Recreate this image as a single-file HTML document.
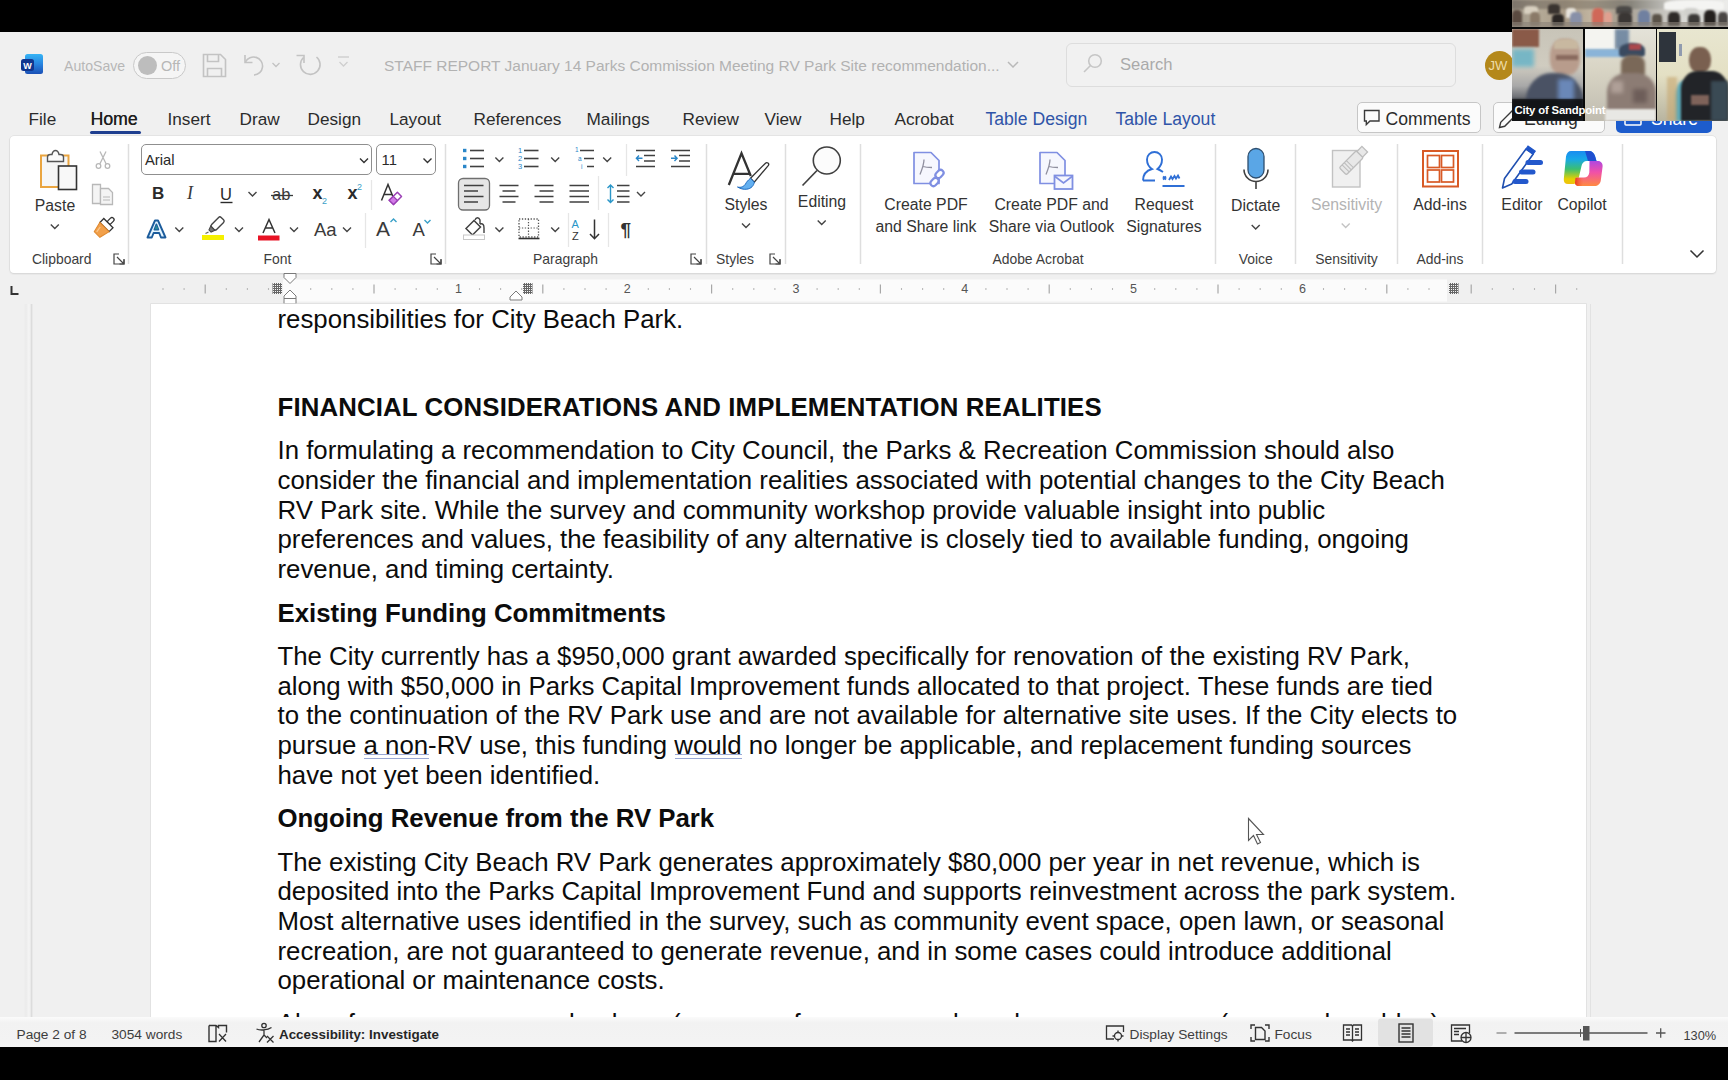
<!DOCTYPE html>
<html><head><meta charset="utf-8">
<style>
*{box-sizing:border-box;margin:0;padding:0}
html,body{width:1728px;height:1080px;overflow:hidden;background:#000;font-family:"Liberation Sans",sans-serif;color:#242424}
.abs{position:absolute}
.t{position:absolute;white-space:nowrap;line-height:0}
.doc{position:absolute;left:277.5px;font-size:25.8px;color:#0c0c0c;white-space:nowrap;line-height:0}
.doc u{text-decoration:none;border-bottom:1.5px solid #8a9bc0}
.h{font-weight:bold}
</style></head><body>
<div class="abs" style="left:0;top:32px;width:1728px;height:1015px;background:#f0f0f0"></div>
<svg class="abs" style="left:20px;top:52px" width="24" height="24" viewBox="0 0 24 24">
<defs><linearGradient id="wg" x1="0" y1="0" x2="0" y2="1"><stop offset="0" stop-color="#36b4f5"/><stop offset="0.5" stop-color="#2784e0"/><stop offset="1" stop-color="#1a4fb5"/></linearGradient></defs>
<rect x="5" y="2" width="18" height="20" rx="2.5" fill="url(#wg)"/>
<rect x="1" y="7" width="13" height="12" rx="2.5" fill="#10368f"/>
<text x="7.5" y="16.5" font-size="9" font-weight="bold" fill="#fff" text-anchor="middle" font-family="Liberation Sans">W</text></svg>
<div class="t" style="left:64.0px;top:66.11px;font-size:14.1px;color:#b7b7b7;font-weight:normal;">AutoSave</div>
<div class="abs" style="left:133px;top:52px;width:53px;height:27px;border:1.5px solid #c9c9c9;border-radius:14px;background:#f5f5f5"></div>
<div class="abs" style="left:137.5px;top:56px;width:19px;height:19px;border-radius:50%;background:#bdbdbd"></div>
<div class="t" style="left:161.0px;top:65.98px;font-size:14.5px;color:#b7b7b7;font-weight:normal;">Off</div>
<svg class="abs" style="left:0;top:0" width="1100" height="95" fill="none" stroke="#c3c3c3" stroke-width="1.6">
<path d="M203.5 54.5h17l5 5v17h-22z"/><path d="M207.5 54.5v7h11v-7"/><path d="M207.5 76.5v-8h14v8"/>
<path d="M245 55v7.5h7.5"/><path d="M245.5 62A9 9 0 1 1 254 75"/>
<path d="M272.5 63l3.5 3.5 3.5-3.5" stroke-width="1.3"/>
<path d="M303.5 57.5A9.8 9.8 0 1 0 316.5 57"/><path d="M296.5 55.5h7.5v7.5"/>
<path d="M338 57h11M339.5 62l4 4 4-4" stroke="#cfcfcf" stroke-width="1.3"/>
<path d="M1008 62l5 5 5-5" stroke="#b9b9b9" stroke-width="1.5"/>
</svg>
<div class="t" style="left:384.0px;top:65.63px;font-size:15.5px;color:#b2b2b2;font-weight:normal;">STAFF REPORT January 14 Parks Commission Meeting RV Park Site recommendation...</div>
<div class="abs" style="left:1066px;top:43px;width:390px;height:44px;border:1.5px solid #dddddd;border-radius:6px;background:#f1f1f1"></div>
<svg class="abs" style="left:1080px;top:52px" width="24" height="24" fill="none" stroke="#c6c6c6" stroke-width="1.6"><circle cx="15" cy="9" r="6.3"/><path d="M10.5 13.5L4 20"/></svg>
<div class="t" style="left:1120.0px;top:65.25px;font-size:16.6px;color:#aaaaaa;font-weight:normal;">Search</div>
<div class="abs" style="left:1485px;top:51px;width:29px;height:29px;border-radius:50%;background:#b4881a"></div>
<div class="t" style="left:1488.5px;top:66.00px;font-size:13px;color:#efdca8;font-weight:normal;">JW</div>
<div class="t" style="left:28.5px;top:119.04px;font-size:17.2px;color:#2b2b2b;font-weight:normal;">File</div>
<div class="t" style="left:90.5px;top:118.90px;font-size:17.6px;color:#1f1f1f;font-weight:normal;text-shadow:0.35px 0 0 #1f1f1f">Home</div>
<div class="t" style="left:167.5px;top:119.04px;font-size:17.2px;color:#2b2b2b;font-weight:normal;">Insert</div>
<div class="t" style="left:239.5px;top:119.04px;font-size:17.2px;color:#2b2b2b;font-weight:normal;">Draw</div>
<div class="t" style="left:307.5px;top:119.04px;font-size:17.2px;color:#2b2b2b;font-weight:normal;">Design</div>
<div class="t" style="left:389.5px;top:119.04px;font-size:17.2px;color:#2b2b2b;font-weight:normal;">Layout</div>
<div class="t" style="left:473.5px;top:119.04px;font-size:17.2px;color:#2b2b2b;font-weight:normal;">References</div>
<div class="t" style="left:586.5px;top:119.04px;font-size:17.2px;color:#2b2b2b;font-weight:normal;">Mailings</div>
<div class="t" style="left:682.5px;top:119.04px;font-size:17.2px;color:#2b2b2b;font-weight:normal;">Review</div>
<div class="t" style="left:764.5px;top:119.04px;font-size:17.2px;color:#2b2b2b;font-weight:normal;">View</div>
<div class="t" style="left:829.5px;top:119.04px;font-size:17.2px;color:#2b2b2b;font-weight:normal;">Help</div>
<div class="t" style="left:894.5px;top:119.04px;font-size:17.2px;color:#2b2b2b;font-weight:normal;">Acrobat</div>
<div class="t" style="left:985.5px;top:118.90px;font-size:17.6px;color:#2f54a8;font-weight:normal;">Table Design</div>
<div class="t" style="left:1115.5px;top:118.90px;font-size:17.6px;color:#2f54a8;font-weight:normal;">Table Layout</div>
<div class="abs" style="left:90px;top:130.5px;width:51px;height:3px;border-radius:2px;background:#1f3f90"></div>
<div class="abs" style="left:1357px;top:102px;width:123.5px;height:31px;border:1.3px solid #c6c6c6;border-radius:5px;background:#fbfbfb"></div>
<svg class="abs" style="left:1363px;top:108px" width="20" height="20" fill="none" stroke="#3a3a3a" stroke-width="1.4"><path d="M1.5 2.5h14.5v10.5h-9l-3.7 3.5v-3.5h-1.8z"/></svg>
<div class="t" style="left:1385.5px;top:118.90px;font-size:17.6px;color:#2b2b2b;font-weight:normal;">Comments</div>
<div class="abs" style="left:1492.5px;top:102px;width:112px;height:31px;border:1.3px solid #c6c6c6;border-radius:5px;background:#fbfbfb"></div>
<svg class="abs" style="left:1497px;top:107px" width="22" height="22" fill="none" stroke="#3a3a3a" stroke-width="1.4"><path d="M2.5 20.5l1.2-5.2L15 4l4 4L7.7 19.3z"/></svg>
<div class="t" style="left:1524.0px;top:118.90px;font-size:17.6px;color:#2b2b2b;font-weight:normal;">Editing</div>
<div class="abs" style="left:1616px;top:102px;width:96px;height:31px;border-radius:5px;background:#1d5ccc"></div>
<svg class="abs" style="left:1622px;top:108px" width="22" height="22" fill="none" stroke="#fff" stroke-width="1.5"><rect x="3" y="5" width="16" height="12" rx="1"/></svg>
<div class="t" style="left:1651.0px;top:118.90px;font-size:17.6px;color:#ffffff;font-weight:normal;">Share</div>
<div class="abs" style="left:10px;top:136px;width:1706px;height:136.5px;background:#fff;border-radius:4px;box-shadow:0 0 0 0.6px #d9d9d9, 0 1px 2px rgba(0,0,0,0.12)"></div>
<div class="t" style="left:-95.0px;width:300px;text-align:center;top:205.93px;font-size:15.8px;color:#333;font-weight:normal;">Paste</div>
<div class="t" style="left:32.0px;top:258.88px;font-size:13.9px;color:#3d3d3d;font-weight:normal;">Clipboard</div>
<div class="abs" style="left:141px;top:144px;width:231px;height:30.5px;border:1.3px solid #8f8f8f;border-radius:5px;background:#fff"></div>
<div class="abs" style="left:376px;top:144px;width:59.5px;height:30.5px;border:1.3px solid #8f8f8f;border-radius:5px;background:#fff"></div>
<div class="t" style="left:145.0px;top:159.67px;font-size:14.8px;color:#2a2a2a;font-weight:normal;">Arial</div>
<div class="t" style="left:381.5px;top:159.67px;font-size:14.8px;color:#2a2a2a;font-weight:normal;">11</div>
<div class="t" style="left:152.0px;top:193.81px;font-size:17px;color:#2a2a2a;font-weight:bold;">B</div>
<div class="t" style="left:187.0px;top:193.46px;font-size:18px;color:#3a3a3a;font-weight:normal;font-family:'Liberation Serif';font-style:italic">I</div>
<div class="t" style="left:220.0px;top:193.78px;font-size:16.5px;color:#2a2a2a;font-weight:normal;">U</div>
<div class="t" style="left:272.0px;top:193.98px;font-size:16.5px;color:#3a3a3a;font-weight:normal;">ab</div>
<div class="t" style="left:312.5px;top:193.26px;font-size:18px;color:#2a2a2a;font-weight:bold;">x</div>
<div class="t" style="left:322.0px;top:200.88px;font-size:9px;color:#3aa0c8;font-weight:normal;">2</div>
<div class="t" style="left:347.5px;top:193.26px;font-size:18px;color:#2a2a2a;font-weight:bold;">x</div>
<div class="t" style="left:357.0px;top:186.88px;font-size:9px;color:#3aa0c8;font-weight:normal;">2</div>
<div class="t" style="left:314.0px;top:230.09px;font-size:18.5px;color:#3a3a3a;font-weight:normal;">Aa</div>
<div class="t" style="left:376.0px;top:229.22px;font-size:21px;color:#3a3a3a;font-weight:normal;">A</div>
<div class="t" style="left:412.5px;top:230.09px;font-size:18.5px;color:#3a3a3a;font-weight:normal;">A</div>
<div class="t" style="left:127.5px;width:300px;text-align:center;top:258.88px;font-size:13.9px;color:#3d3d3d;font-weight:normal;">Font</div>
<div class="t" style="left:620.5px;top:230.42px;font-size:19px;color:#333;font-weight:bold;">¶</div>
<div class="t" style="left:415.5px;width:300px;text-align:center;top:258.88px;font-size:13.9px;color:#3d3d3d;font-weight:normal;">Paragraph</div>
<div class="t" style="left:596.0px;width:300px;text-align:center;top:205.13px;font-size:15.8px;color:#333;font-weight:normal;">Styles</div>
<div class="t" style="left:585.0px;width:300px;text-align:center;top:258.88px;font-size:13.9px;color:#3d3d3d;font-weight:normal;">Styles</div>
<div class="t" style="left:672.0px;width:300px;text-align:center;top:202.03px;font-size:15.8px;color:#333;font-weight:normal;">Editing</div>
<div class="t" style="left:776.0px;width:300px;text-align:center;top:205.03px;font-size:15.8px;color:#333;font-weight:normal;">Create PDF</div>
<div class="t" style="left:776.0px;width:300px;text-align:center;top:226.53px;font-size:15.8px;color:#333;font-weight:normal;">and Share link</div>
<div class="t" style="left:901.5px;width:300px;text-align:center;top:205.03px;font-size:15.8px;color:#333;font-weight:normal;">Create PDF and</div>
<div class="t" style="left:901.5px;width:300px;text-align:center;top:226.53px;font-size:15.8px;color:#333;font-weight:normal;">Share via Outlook</div>
<div class="t" style="left:1014.0px;width:300px;text-align:center;top:205.03px;font-size:15.8px;color:#333;font-weight:normal;">Request</div>
<div class="t" style="left:1014.0px;width:300px;text-align:center;top:226.53px;font-size:15.8px;color:#333;font-weight:normal;">Signatures</div>
<div class="t" style="left:888.0px;width:300px;text-align:center;top:258.88px;font-size:13.9px;color:#3d3d3d;font-weight:normal;">Adobe Acrobat</div>
<div class="t" style="left:1105.7px;width:300px;text-align:center;top:205.73px;font-size:15.8px;color:#333;font-weight:normal;">Dictate</div>
<div class="t" style="left:1105.7px;width:300px;text-align:center;top:258.88px;font-size:13.9px;color:#3d3d3d;font-weight:normal;">Voice</div>
<div class="t" style="left:1196.5px;width:300px;text-align:center;top:205.03px;font-size:15.8px;color:#b3b3b3;font-weight:normal;">Sensitivity</div>
<div class="t" style="left:1196.5px;width:300px;text-align:center;top:258.88px;font-size:13.9px;color:#3d3d3d;font-weight:normal;">Sensitivity</div>
<div class="t" style="left:1290.0px;width:300px;text-align:center;top:205.03px;font-size:15.8px;color:#333;font-weight:normal;">Add-ins</div>
<div class="t" style="left:1290.0px;width:300px;text-align:center;top:258.88px;font-size:13.9px;color:#3d3d3d;font-weight:normal;">Add-ins</div>
<div class="t" style="left:1372.0px;width:300px;text-align:center;top:205.03px;font-size:15.8px;color:#333;font-weight:normal;">Editor</div>
<div class="t" style="left:1432.0px;width:300px;text-align:center;top:205.03px;font-size:15.8px;color:#333;font-weight:normal;">Copilot</div>
<svg class="abs" style="left:0;top:0" width="1728" height="280"><path d="M128.5 144V264" stroke="#dedede" stroke-width="1.5"/><path d="M445.5 144V264" stroke="#dedede" stroke-width="1.5"/><path d="M706.5 144V264" stroke="#dedede" stroke-width="1.5"/><path d="M785.5 144V264" stroke="#dedede" stroke-width="1.5"/><path d="M860.5 144V264" stroke="#dedede" stroke-width="1.5"/><path d="M1215.5 144V264" stroke="#dedede" stroke-width="1.5"/><path d="M1295.5 144V264" stroke="#dedede" stroke-width="1.5"/><path d="M1397.5 144V264" stroke="#dedede" stroke-width="1.5"/><path d="M1482.5 144V264" stroke="#dedede" stroke-width="1.5"/><path d="M1622.5 144V264" stroke="#dedede" stroke-width="1.5"/><path d="M371.5 180V210" stroke="#e6e6e6" stroke-width="1.3"/><path d="M365.5 213V248" stroke="#e6e6e6" stroke-width="1.3"/><path d="M626.5 144V176" stroke="#e6e6e6" stroke-width="1.3"/><path d="M598.5 176V210" stroke="#e6e6e6" stroke-width="1.3"/><path d="M568.5 213V247" stroke="#e6e6e6" stroke-width="1.3"/><path d="M608.5 213V247" stroke="#e6e6e6" stroke-width="1.3"/><rect x="41" y="155.5" width="27.5" height="31.5" fill="#f6f6f6" stroke="#eaa540" stroke-width="2"/><path d="M47.5 161.5v-4.5c0-1.5 1.5-2.5 3-2.5h1.5c0.5-2.5 2-4 3.5-4s3 1.5 3.5 4h1.5c1.5 0 3 1 3 2.5v4.5z" fill="#fafafa" stroke="#555" stroke-width="1.4"/><rect x="58.5" y="166" width="18" height="23.5" fill="#f8f8f8" stroke="#333" stroke-width="1.6"/><path d="M50.8 224.5L54.8 228.5L58.8 224.5" fill="none" stroke="#444" stroke-width="1.4"/><g fill="none" stroke="#b8b8b8" stroke-width="1.3"><circle cx="98.5" cy="166" r="2.3"/><circle cx="107.5" cy="166" r="2.3"/><path d="M99.8 164L106 151.5M106.2 164L100 151.5"/></g><g fill="#f4f4f4" stroke="#b8b8b8" stroke-width="1.3"><path d="M92.5 184.5h8l0 19h-8z"/><path d="M100.5 188.5h8l4 4v12h-12z"/><path d="M103 197h7M103 200h7" stroke-width="1"/></g><g transform="rotate(45 104.5 227)"><rect x="102.5" y="214.5" width="4.2" height="7.5" rx="2" fill="#fff" stroke="#333" stroke-width="1.3"/><rect x="98" y="221.5" width="13" height="5.5" fill="#fff" stroke="#333" stroke-width="1.3"/><path d="M98 227h13l-2.5 10.5h-8z" fill="#f2a04a" stroke="#e0892e" stroke-width="1"/><path d="M101.5 230l1 6" stroke="#f8c890" stroke-width="1.2"/></g><g fill="none" stroke="#444" stroke-width="1.2"><path d="M119 254H114V264H124V259"/><path d="M117 257L124 264M124 259.5V264H119.5"/></g><path d="M360.0 158.5L364.0 162.5L368.0 158.5" fill="none" stroke="#333" stroke-width="1.4"/><path d="M423.5 158.5L427.5 162.5L431.5 158.5" fill="none" stroke="#333" stroke-width="1.4"/><path d="M220.5 202.5h12" stroke="#2a2a2a" stroke-width="1.4"/><path d="M248.5 192.0L252.5 196.0L256.5 192.0" fill="none" stroke="#444" stroke-width="1.4"/><path d="M271 195.5h22" stroke="#3a3a3a" stroke-width="1.3"/><path d="M381.5 200.5L388 184.5L394.5 200.5M384.2 194.5H392" fill="none" stroke="#333" stroke-width="1.5"/><path d="M389.2 200.3l8.2-8.1 4.1 4.3-8 8z" fill="#fff" stroke="#9b3fb5" stroke-width="1.5" stroke-linejoin="round"/><path d="M389.2 200.3l4.1-4 4.2 4.2-4 4z" fill="#d27be8" stroke="#9b3fb5" stroke-width="1.3"/><path d="M147.5 237.5L155 220.5h3L165.5 237.5h-4.5l-1.8-4.5h-5.6l-1.8 4.5z M154.5 229.5h3.8l-1.9-5z" fill="#e6f6ff" stroke="#1c5c9c" stroke-width="1.9" stroke-linejoin="round" fill-rule="evenodd"/><path d="M154.6 229.3h3.7l-1.85-4.6z" fill="#2a8a9a"/><path d="M175.3 227.5L179.3 231.5L183.3 227.5" fill="none" stroke="#444" stroke-width="1.4"/><g transform="rotate(45 216 225)"><rect x="212.5" y="216" width="7" height="13.5" rx="1.8" fill="#fff" stroke="#444" stroke-width="1.4"/><path d="M213 229.5h6l-1.5 4h-3z" fill="#777" stroke="#444" stroke-width="1"/></g><path d="M205.5 233.5l3-1.5" stroke="#666" stroke-width="1.3"/><rect x="202" y="235" width="22" height="5" fill="#f5f000"/><path d="M235.0 227.5L239.0 231.5L243.0 227.5" fill="none" stroke="#444" stroke-width="1.4"/><path d="M263 233L269 219.5L275 233M265.3 228H272.7" fill="none" stroke="#333" stroke-width="1.5"/><rect x="258" y="235.5" width="21.5" height="5" fill="#e81224"/><path d="M290.0 227.5L294.0 231.5L298.0 227.5" fill="none" stroke="#444" stroke-width="1.4"/><path d="M343.0 227.5L347.0 231.5L351.0 227.5" fill="none" stroke="#444" stroke-width="1.4"/><path d="M390.5 222l3-3 3 3" fill="none" stroke="#3aa0c8" stroke-width="1.4"/><path d="M424.5 220l3 3 3-3" fill="none" stroke="#3aa0c8" stroke-width="1.4"/><g fill="none" stroke="#444" stroke-width="1.2"><path d="M436 254H431V264H441V259"/><path d="M434 257L441 264M441 259.5V264H436.5"/></g><rect x="463" y="148.8" width="3.4" height="3.4" fill="#2a86c8"/><rect x="463" y="156.8" width="3.4" height="3.4" fill="#2a86c8"/><rect x="463" y="164.8" width="3.4" height="3.4" fill="#2a86c8"/><path d="M470 150.5H484" stroke="#404040" stroke-width="1.6"/><path d="M470 158.5H484" stroke="#404040" stroke-width="1.6"/><path d="M470 166.5H484" stroke="#404040" stroke-width="1.6"/><path d="M495.4 157.5L499.4 161.5L503.4 157.5" fill="none" stroke="#444" stroke-width="1.4"/><text x="518" y="152.5" font-family="Liberation Sans" font-size="7.5" fill="#2a86c8">1</text><text x="518" y="160.5" font-family="Liberation Sans" font-size="7.5" fill="#2a86c8">2</text><text x="518" y="168.5" font-family="Liberation Sans" font-size="7.5" fill="#2a86c8">3</text><path d="M524 150.5H538.5" stroke="#404040" stroke-width="1.6"/><path d="M524 158.5H538.5" stroke="#404040" stroke-width="1.6"/><path d="M524 166.5H538.5" stroke="#404040" stroke-width="1.6"/><path d="M551.2 157.5L555.2 161.5L559.2 157.5" fill="none" stroke="#444" stroke-width="1.4"/><text x="575" y="152" font-family="Liberation Sans" font-size="6.5" fill="#2a86c8">1</text><text x="578" y="160.5" font-family="Liberation Sans" font-size="6.5" fill="#2a86c8">a</text><text x="581" y="168.5" font-family="Liberation Sans" font-size="6.5" fill="#2a86c8">i</text><path d="M580 150.5H594M584 158.5H594M587 166.5H594" stroke="#404040" stroke-width="1.5"/><path d="M603.2 157.5L607.2 161.5L611.2 157.5" fill="none" stroke="#444" stroke-width="1.4"/><path d="M636 150.5H655M644 155.5H655M644 161H655M636 166.5H655" stroke="#404040" stroke-width="1.5"/><path d="M636.5 158.2h6M639 155.5l-2.6 2.7 2.6 2.7" fill="none" stroke="#2a86c8" stroke-width="1.4"/><path d="M671 150.5H690M679 155.5H690M679 161H690M671 166.5H690" stroke="#404040" stroke-width="1.5"/><path d="M671 158.2h6.5M674.5 155.5l2.6 2.7-2.6 2.7" fill="none" stroke="#2a86c8" stroke-width="1.4"/><rect x="458.5" y="178.5" width="31" height="31.5" rx="4.5" fill="#e6e6e6" stroke="#6f6f6f" stroke-width="1.3"/><path d="M464 185.5H483.5M464 191H478M464 196.5H483.5M464 202H478" stroke="#404040" stroke-width="1.6"/><path d="M499.5 185.5H518.5M502.5 191H515.5M499.5 196.5H518.5M502.5 202H515.5" stroke="#404040" stroke-width="1.6"/><path d="M534.5 185.5H553.5M539.5 191H553.5M534.5 196.5H553.5M539.5 202H553.5" stroke="#404040" stroke-width="1.6"/><path d="M569.5 185.5H589M569.5 191H589M569.5 196.5H589M569.5 202H589" stroke="#404040" stroke-width="1.6"/><path d="M617 185.5H629.5M617 191H629.5M617 196.5H629.5M617 202H629.5" stroke="#404040" stroke-width="1.6"/><path d="M610.5 185v17.5M607.5 188l3-3 3 3M607.5 199.5l3 3 3-3" fill="none" stroke="#2a96c8" stroke-width="1.4"/><path d="M637.0 192.0L641.0 196.0L645.0 192.0" fill="none" stroke="#444" stroke-width="1.4"/><path d="M466 228.5l8-8 6.5 6.5-8 8z" fill="#fff" stroke="#404040" stroke-width="1.5"/><path d="M475 220c1-3 4-3 5 0l0 4M480 224c3-1 4 1 4 4v5" fill="none" stroke="#404040" stroke-width="1.4"/><rect x="463.5" y="235" width="21" height="4.5" fill="#fff" stroke="#c8c8c8" stroke-width="1"/><path d="M495.4 227.5L499.4 231.5L503.4 227.5" fill="none" stroke="#444" stroke-width="1.4"/><rect x="519" y="219" width="19.5" height="18" fill="none" stroke="#555" stroke-width="1.3" stroke-dasharray="1.3 1.6"/><path d="M528.5 219v18M519 228h19.5" stroke="#555" stroke-width="1.2" stroke-dasharray="1.3 1.6"/><path d="M518.5 238.5h21" stroke="#333" stroke-width="1.6"/><path d="M551.2 227.5L555.2 231.5L559.2 227.5" fill="none" stroke="#444" stroke-width="1.4"/><text x="571.5" y="228" font-family="Liberation Sans" font-size="11" fill="#2a96c8">A</text><text x="572" y="240" font-family="Liberation Sans" font-size="11" fill="#333">Z</text><path d="M594.5 219.5v19M590 234l4.5 4.7 4.5-4.7" fill="none" stroke="#333" stroke-width="1.5"/><g fill="none" stroke="#444" stroke-width="1.2"><path d="M696 254H691V264H701V259"/><path d="M694 257L701 264M701 259.5V264H696.5"/></g><path d="M728.8 185L741.5 153.2L750.8 176M733.8 173.8H749" fill="none" stroke="#333" stroke-width="2.3"/><path d="M750.5 178.2L765.5 163.2C767 161.7 769.6 163.6 768.4 165.4L754.2 182.2z" fill="#fff" stroke="#333" stroke-width="1.3"/><path d="M737.5 187C741 188 744 186.5 745.5 184C746.5 182 748 180.2 750.5 178.3L754.3 182.2C753.8 185.7 751.2 188.6 746.8 189.2C743.3 189.7 740.2 188.6 737.5 187Z" fill="#64b0f0" stroke="#1f6cc0" stroke-width="1"/><path d="M742.0 223.5L746.0 227.5L750.0 223.5" fill="none" stroke="#444" stroke-width="1.4"/><g fill="none" stroke="#444" stroke-width="1.2"><path d="M775 254H770V264H780V259"/><path d="M773 257L780 264M780 259.5V264H775.5"/></g><circle cx="826.8" cy="160.5" r="13.5" fill="#fcfcfc" stroke="#404040" stroke-width="1.6"/><path d="M817 170.5L802.5 185.5" stroke="#404040" stroke-width="1.7"/><path d="M817.7 220.5L821.7 224.5L825.7 220.5" fill="none" stroke="#444" stroke-width="1.4"/><path d="M914 152.5h17l8 8v23h-25z" fill="#f6f7fe" stroke="#7f8fe2" stroke-width="1.7" stroke-linejoin="round"/><path d="M920 174.5c2-5 4-10 4-15M923 166.5c3 1 6 1 9 1" fill="none" stroke="#8f8f9f" stroke-width="1.3"/><g fill="#fff" stroke="#7f8fe2" stroke-width="2.2"><rect x="935" y="171" width="9" height="6" rx="3" transform="rotate(-45 939.5 174)"/><rect x="930" y="179" width="9" height="6" rx="3" transform="rotate(-45 934.5 182)"/></g><path d="M1040 152.5h17l8 8v23h-25z" fill="#f6f7fe" stroke="#7f8fe2" stroke-width="1.7" stroke-linejoin="round"/><path d="M1046 174.5c2-5 4-10 4-15M1049 166.5c3 1 6 1 9 1" fill="none" stroke="#8f8f9f" stroke-width="1.3"/><rect x="1054.5" y="175.5" width="18" height="13.5" fill="#f6f7fe" stroke="#7f8fe2" stroke-width="1.8"/><path d="M1055 176.5l8.5 6.5 8.5-6.5" fill="none" stroke="#7f8fe2" stroke-width="1.6"/><path d="M1143 180.5c0-7 4-10 9-11.5-3-2-5-5-5-9.5a7.5 7.5 0 0 1 15 0c0 4.5-2 7.5-4.5 9.5 2.5 1 4 2 5.5 3M1143 180.5h12" fill="none" stroke="#2f6fd6" stroke-width="1.9"/><path d="M1163 176.5l3 3M1166 176.5l-3 3M1169 180l2-3.5 1.5 2.5 2-3 1.5 2.5 2-3 1.5 3M1162.5 186h22" fill="none" stroke="#2f6fd6" stroke-width="1.8"/><rect x="1248" y="148.5" width="16" height="29.5" rx="8" fill="#5aa6e6" stroke="#2f4f6f" stroke-width="1.3"/><path d="M1244 169.5a12 12 0 0 0 24 0M1256 181.5v7.5" fill="none" stroke="#404040" stroke-width="1.6"/><path d="M1251.7 225.0L1255.7 229.0L1259.7 225.0" fill="none" stroke="#444" stroke-width="1.4"/><rect x="1332.5" y="150.5" width="27.5" height="36.5" fill="#f0f0f0" stroke="#c2c2c2" stroke-width="1.4"/><g transform="rotate(-45 1352 162)"><rect x="1339" y="157" width="24" height="10" rx="1.5" fill="#e8e8e8" stroke="#bdbdbd" stroke-width="1.3"/><path d="M1343 157v10M1346 157v10M1349 157v10" stroke="#bdbdbd" stroke-width="1"/><rect x="1363" y="158" width="7" height="8" fill="#e8e8e8" stroke="#bdbdbd" stroke-width="1.3"/></g><path d="M1341.7 223.5L1345.7 227.5L1349.7 223.5" fill="none" stroke="#c4c4c4" stroke-width="1.4"/><rect x="1423" y="151" width="35" height="35.5" fill="#fff" stroke="#d85a26" stroke-width="2"/><g fill="#fff" stroke="#d85a26" stroke-width="1.7"><rect x="1427.5" y="155.5" width="12" height="12"/><rect x="1441.5" y="155.5" width="12" height="12"/><rect x="1427.5" y="170" width="12" height="12"/><rect x="1441.5" y="170" width="12" height="12"/></g><path d="M1502.5 188l2-9.5L1526 149l7.2 5l-21.5 30z" fill="#fff" stroke="#1f4fb0" stroke-width="1.6" stroke-linejoin="round"/><path d="M1526 149l7.2 5l2-2.8l-7.2-5z" fill="#1f55c8" stroke="#1f55c8" stroke-width="1.2"/><g stroke="#2358cc" stroke-width="5" stroke-linecap="round"><path d="M1528 162.5h12.5"/><path d="M1521.5 172h11.5"/><path d="M1515 181.5h11"/></g><defs><linearGradient id="cpA" x1="0" y1="0" x2="0" y2="1"><stop offset="0" stop-color="#1a8cf0"/><stop offset="0.25" stop-color="#18a8e8"/><stop offset="0.55" stop-color="#3cbf70"/><stop offset="0.85" stop-color="#e6d000"/><stop offset="1" stop-color="#f0c010"/></linearGradient>
<linearGradient id="cpB" x1="0" y1="0" x2="0" y2="1"><stop offset="0" stop-color="#b048e0"/><stop offset="0.45" stop-color="#f050a8"/><stop offset="1" stop-color="#ff8a40"/></linearGradient>
<linearGradient id="cpR" x1="0" y1="0" x2="1" y2="0"><stop offset="0" stop-color="#e83818"/><stop offset="1" stop-color="#ff7040" stop-opacity="0"/></linearGradient></defs><path d="M1571 151H1589C1592 151 1594 153 1595 156L1596.5 161H1587C1584 161 1582 163 1581.5 166L1578.5 179C1578 182 1575.5 184 1572.5 184H1568C1565 184 1563.5 182 1563.8 179L1566 156.5C1566.5 153 1568.5 151 1571 151Z" fill="url(#cpA)"/><path d="M1585 151H1589C1592 151 1594 153 1595 156L1596.5 161H1588z" fill="#1f4fd0"/><path d="M1589.5 161H1598C1601 161 1603 163.5 1602.6 166.5L1600.8 180.5C1600.3 184 1597.8 186 1594.5 186H1579C1576 186 1574.5 184 1575.2 181.5L1576 177.5H1584C1587 177.5 1589 175.5 1589.3 172.5z" fill="url(#cpB)"/><path d="M1575.5 178H1584l-2 8h-3c-3 0-4.5-2-3.8-4.5z" fill="url(#cpR)"/><path d="M1690.5 250.5l6.5 6.5 6.5-6.5" fill="none" stroke="#333" stroke-width="1.5"/></svg>
<svg class="abs" style="left:0;top:0" width="1728" height="310"><rect x="0" y="275" width="1728" height="30" fill="#f0f0f0"/><rect x="283" y="279.5" width="1164" height="22" fill="#fbfbfb"/><path d="M11.5 286v8h7" fill="none" stroke="#333" stroke-width="2"/><path d="M163.0 288v2" stroke="#b8b8b8" stroke-width="1.1"/><path d="M184.1 288v2" stroke="#b8b8b8" stroke-width="1.1"/><path d="M205.2 284.5v9" stroke="#a8a8a8" stroke-width="1.2"/><path d="M226.3 288v2" stroke="#b8b8b8" stroke-width="1.1"/><path d="M247.4 288v2" stroke="#b8b8b8" stroke-width="1.1"/><path d="M268.5 288v2" stroke="#b8b8b8" stroke-width="1.1"/><path d="M310.7 288v2" stroke="#b8b8b8" stroke-width="1.1"/><path d="M331.8 288v2" stroke="#b8b8b8" stroke-width="1.1"/><path d="M352.9 288v2" stroke="#b8b8b8" stroke-width="1.1"/><path d="M374.0 284.5v9" stroke="#a8a8a8" stroke-width="1.2"/><path d="M395.1 288v2" stroke="#b8b8b8" stroke-width="1.1"/><path d="M416.2 288v2" stroke="#b8b8b8" stroke-width="1.1"/><path d="M437.3 288v2" stroke="#b8b8b8" stroke-width="1.1"/><text x="458.4" y="293" font-family="Liberation Sans" font-size="12.5" fill="#555" text-anchor="middle">1</text><path d="M479.5 288v2" stroke="#b8b8b8" stroke-width="1.1"/><path d="M500.6 288v2" stroke="#b8b8b8" stroke-width="1.1"/><path d="M521.7 288v2" stroke="#b8b8b8" stroke-width="1.1"/><path d="M542.8 284.5v9" stroke="#a8a8a8" stroke-width="1.2"/><path d="M563.9 288v2" stroke="#b8b8b8" stroke-width="1.1"/><path d="M585.0 288v2" stroke="#b8b8b8" stroke-width="1.1"/><path d="M606.1 288v2" stroke="#b8b8b8" stroke-width="1.1"/><text x="627.2" y="293" font-family="Liberation Sans" font-size="12.5" fill="#555" text-anchor="middle">2</text><path d="M648.3 288v2" stroke="#b8b8b8" stroke-width="1.1"/><path d="M669.4 288v2" stroke="#b8b8b8" stroke-width="1.1"/><path d="M690.5 288v2" stroke="#b8b8b8" stroke-width="1.1"/><path d="M711.6 284.5v9" stroke="#a8a8a8" stroke-width="1.2"/><path d="M732.7 288v2" stroke="#b8b8b8" stroke-width="1.1"/><path d="M753.8 288v2" stroke="#b8b8b8" stroke-width="1.1"/><path d="M774.9 288v2" stroke="#b8b8b8" stroke-width="1.1"/><text x="796.0" y="293" font-family="Liberation Sans" font-size="12.5" fill="#555" text-anchor="middle">3</text><path d="M817.1 288v2" stroke="#b8b8b8" stroke-width="1.1"/><path d="M838.2 288v2" stroke="#b8b8b8" stroke-width="1.1"/><path d="M859.3 288v2" stroke="#b8b8b8" stroke-width="1.1"/><path d="M880.4 284.5v9" stroke="#a8a8a8" stroke-width="1.2"/><path d="M901.5 288v2" stroke="#b8b8b8" stroke-width="1.1"/><path d="M922.6 288v2" stroke="#b8b8b8" stroke-width="1.1"/><path d="M943.7 288v2" stroke="#b8b8b8" stroke-width="1.1"/><text x="964.8" y="293" font-family="Liberation Sans" font-size="12.5" fill="#555" text-anchor="middle">4</text><path d="M985.9 288v2" stroke="#b8b8b8" stroke-width="1.1"/><path d="M1007.0 288v2" stroke="#b8b8b8" stroke-width="1.1"/><path d="M1028.1 288v2" stroke="#b8b8b8" stroke-width="1.1"/><path d="M1049.2 284.5v9" stroke="#a8a8a8" stroke-width="1.2"/><path d="M1070.3 288v2" stroke="#b8b8b8" stroke-width="1.1"/><path d="M1091.4 288v2" stroke="#b8b8b8" stroke-width="1.1"/><path d="M1112.5 288v2" stroke="#b8b8b8" stroke-width="1.1"/><text x="1133.6" y="293" font-family="Liberation Sans" font-size="12.5" fill="#555" text-anchor="middle">5</text><path d="M1154.7 288v2" stroke="#b8b8b8" stroke-width="1.1"/><path d="M1175.8 288v2" stroke="#b8b8b8" stroke-width="1.1"/><path d="M1196.9 288v2" stroke="#b8b8b8" stroke-width="1.1"/><path d="M1218.0 284.5v9" stroke="#a8a8a8" stroke-width="1.2"/><path d="M1239.1 288v2" stroke="#b8b8b8" stroke-width="1.1"/><path d="M1260.2 288v2" stroke="#b8b8b8" stroke-width="1.1"/><path d="M1281.3 288v2" stroke="#b8b8b8" stroke-width="1.1"/><text x="1302.4" y="293" font-family="Liberation Sans" font-size="12.5" fill="#555" text-anchor="middle">6</text><path d="M1323.5 288v2" stroke="#b8b8b8" stroke-width="1.1"/><path d="M1344.6 288v2" stroke="#b8b8b8" stroke-width="1.1"/><path d="M1365.7 288v2" stroke="#b8b8b8" stroke-width="1.1"/><path d="M1386.8 284.5v9" stroke="#a8a8a8" stroke-width="1.2"/><path d="M1407.9 288v2" stroke="#b8b8b8" stroke-width="1.1"/><path d="M1429.0 288v2" stroke="#b8b8b8" stroke-width="1.1"/><path d="M1450.1 288v2" stroke="#b8b8b8" stroke-width="1.1"/><path d="M1471.2 284.5v9" stroke="#a8a8a8" stroke-width="1.2"/><path d="M1492.3 288v2" stroke="#b8b8b8" stroke-width="1.1"/><path d="M1513.4 288v2" stroke="#b8b8b8" stroke-width="1.1"/><path d="M1534.5 288v2" stroke="#b8b8b8" stroke-width="1.1"/><path d="M1555.6 284.5v9" stroke="#a8a8a8" stroke-width="1.2"/><path d="M1576.7 288v2" stroke="#b8b8b8" stroke-width="1.1"/><path d="M284 273.5h12v4l-6 6-6-6z" fill="#fff" stroke="#7a7a7a" stroke-width="1"/><path d="M284 296l6-6 6 6v8h-12z" fill="#fff" stroke="#7a7a7a" stroke-width="1"/><path d="M284 298.5h12" stroke="#7a7a7a" stroke-width="1"/><path d="M510 297l6-6 6 6v3h-12z" fill="#fff" stroke="#7a7a7a" stroke-width="1"/><defs><pattern id="hat" width="2" height="2" patternUnits="userSpaceOnUse"><rect width="2" height="2" fill="#f4f4f4"/><rect width="1" height="2" fill="#666"/><rect width="2" height="1" fill="#666"/></pattern></defs><rect x="272.5" y="283" width="9.5" height="11" fill="url(#hat)"/><rect x="523" y="283" width="9.5" height="11" fill="url(#hat)"/><rect x="1449" y="283" width="9.5" height="11" fill="url(#hat)"/></svg>
<div class="abs" style="left:24px;top:304px;width:9px;height:713px;background:linear-gradient(90deg,#efefef 0px,#ebebeb 2px,#f3f3f3 4.5px,#f1f1f1 6px,#dcdcdc 7.5px,#eeeeee 9px)"></div>
<div class="abs" style="left:1590px;top:304px;width:1px;height:713px;background:#e2e2e2"></div>
<div class="abs" style="left:151px;top:304px;width:1434.5px;height:713px;background:#fff;box-shadow:0 0 0 0.7px #dcdcdc"></div>
<div class="abs" style="left:0;top:0;width:1728px;height:1017px;overflow:hidden"><div class="doc" id="L0" style="top:319.46px">responsibilities for City Beach Park.</div>
<div class="doc h" id="L1" style="letter-spacing:0.14px;top:406.96px">FINANCIAL CONSIDERATIONS AND IMPLEMENTATION REALITIES</div>
<div class="doc" id="L2" style="top:450.26px">In formulating a recommendation to City Council, the Parks &amp; Recreation Commission should also</div>
<div class="doc" id="L3" style="top:479.96px">consider the financial and implementation realities associated with potential changes to the City Beach</div>
<div class="doc" id="L4" style="top:509.66px">RV Park site. While the survey and community workshop provide valuable insight into public</div>
<div class="doc" id="L5" style="top:539.36px">preferences and values, the feasibility of any alternative is closely tied to available funding, ongoing</div>
<div class="doc" id="L6" style="top:568.96px">revenue, and timing certainty.</div>
<div class="doc h" id="L7" style="top:612.76px">Existing Funding Commitments</div>
<div class="doc" id="L8" style="top:656.26px">The City currently has a $950,000 grant awarded specifically for renovation of the existing RV Park,</div>
<div class="doc" id="L9" style="top:685.86px">along with $50,000 in Parks Capital Improvement funds allocated to that project. These funds are tied</div>
<div class="doc" id="L10" style="top:715.46px">to the continuation of the RV Park use and are not available for alternative site uses. If the City elects to</div>
<div class="doc" id="L11" style="top:745.06px">pursue a non-RV use, this funding would no longer be applicable, and replacement funding sources</div>
<div class="doc" id="L12" style="top:774.76px">have not yet been identified.</div>
<div class="doc h" id="L13" style="top:818.16px">Ongoing Revenue from the RV Park</div>
<div class="doc" id="L14" style="top:861.76px">The existing City Beach RV Park generates approximately $80,000 per year in net revenue, which is</div>
<div class="doc" id="L15" style="top:891.36px">deposited into the Parks Capital Improvement Fund and supports reinvestment across the park system.</div>
<div class="doc" id="L16" style="top:920.96px">Most alternative uses identified in the survey, such as community event space, open lawn, or seasonal</div>
<div class="doc" id="L17" style="top:950.66px">recreation, are not guaranteed to generate revenue, and in some cases could introduce additional</div>
<div class="doc" id="L18" style="top:980.26px">operational or maintenance costs.</div>
<div class="doc" style="left:277.4px;top:1022.76px">A</div>
<div class="doc" style="left:294.9px;top:1022.76px">l</div>
<div class="doc" style="left:347.7px;top:1022.76px">f</div>
<div class="doc" style="left:568.9px;top:1022.76px">l</div>
<div class="doc" style="left:611.8px;top:1022.76px">l</div>
<div class="doc" style="left:672px;top:1022.76px">(</div>
<div class="doc" style="left:793.4px;top:1022.76px">f</div>
<div class="doc" style="left:952.9px;top:1022.76px">l</div>
<div class="doc" style="left:1014.2px;top:1022.76px">l</div>
<div class="doc" style="left:1219.6px;top:1022.76px">(</div>
<div class="doc" style="left:1324.6px;top:1022.76px">l</div>
<div class="doc" style="left:1381.1px;top:1022.76px">l</div>
<div class="doc" style="left:1395.8px;top:1022.76px">l</div>
<div class="doc" style="left:1430.6px;top:1022.76px">)</div></div>
<div class="abs" style="left:364px;top:754px;width:64.5px;height:4.5px;border-top:1.2px solid #9aa8d4;border-bottom:1.2px solid #9aa8d4"></div>
<div class="abs" style="left:674.5px;top:754px;width:67.5px;height:4.5px;border-top:1.2px solid #9aa8d4;border-bottom:1.2px solid #9aa8d4"></div>
<svg class="abs" style="left:1246px;top:816px" width="22" height="30"><path d="M2.5 2.5v22l5-5 4 8.5 3-1.5-4-8h7z" fill="#fff" stroke="#555" stroke-width="1.1"/></svg>
<div class="abs" style="left:0;top:1017px;width:1728px;height:30px;background:linear-gradient(180deg,#fbfbfb 0px,#f2f2f2 6px,#f3f3f3 24px,#f6f6f6 30px)"></div>
<div class="t" style="left:16.5px;top:1035.25px;font-size:13.7px;color:#3d3d3d;font-weight:normal;">Page 2 of 8</div>
<div class="t" style="left:111.5px;top:1035.25px;font-size:13.7px;color:#3d3d3d;font-weight:normal;">3054 words</div>
<div class="t" style="left:279.0px;top:1035.36px;font-size:13.4px;color:#262626;font-weight:bold;">Accessibility: Investigate</div>
<div class="t" style="left:1129.5px;top:1035.25px;font-size:13.7px;color:#3d3d3d;font-weight:normal;">Display Settings</div>
<div class="t" style="left:1274.5px;top:1035.25px;font-size:13.7px;color:#3d3d3d;font-weight:normal;">Focus</div>
<svg class="abs" style="left:0;top:1010px;overflow:visible" width="1728" height="40"><g transform="translate(0 -1010)"><path d="M209 1025.5h7l2.5 2v-2h8v7M216 1025.5v16h-7v-16" fill="none" stroke="#333" stroke-width="1.4"/><path d="M219 1034l7 7.5M226 1034l-7 7.5" stroke="#333" stroke-width="1.3"/><g fill="none" stroke="#333" stroke-width="1.3"><circle cx="264" cy="1025.5" r="2.2"/><path d="M256.5 1029c3 1.5 11 1.5 15-1.5M264 1030v5l-5 7M264 1035l3 3"/><path d="M267 1036l6.5 6.5M273.5 1036l-6.5 6.5"/></g><g fill="none" stroke="#333" stroke-width="1.3"><path d="M1114 1039h-7.5v-13h17v6"/><circle cx="1118" cy="1036" r="3.5"/><path d="M1118 1030.5v2M1118 1039.5v2M1112.5 1036h2M1121.5 1036h2"/></g><g fill="none" stroke="#333" stroke-width="1.4"><path d="M1251 1029v-4h4M1265 1025h4v4M1269 1037v4h-4M1255 1041h-4v-4"/><path d="M1255.5 1027.5h6l3.5 3.5v8.5h-9.5z"/></g><g fill="none" stroke="#333" stroke-width="1.3"><path d="M1343.5 1025h8l1 1 1-1h8v15h-8l-1 1-1-1h-8z"/><path d="M1352.5 1026v14M1346 1029h4M1346 1032h4M1346 1035h4M1355 1029h4M1355 1032h4M1355 1035h4"/></g><rect x="1378" y="1018.5" width="55" height="28" rx="3" fill="#e2e2e2"/><g fill="none" stroke="#333" stroke-width="1.4"><rect x="1399" y="1024" width="14" height="18"/><path d="M1401.5 1028h9M1401.5 1031h9M1401.5 1034h9M1401.5 1037h9"/></g><g fill="none" stroke="#333" stroke-width="1.3"><path d="M1462 1041h-10.5v-16h18v8"/><path d="M1454 1028.5h12M1454 1031.5h5M1454 1034.5h5"/><circle cx="1466" cy="1037.5" r="5" fill="#f4f4f4"/><path d="M1461 1037.5h10M1466 1032.5v10"/></g><path d="M1496.5 1033h10" stroke="#888" stroke-width="1.3"/><path d="M1514.5 1033h133" stroke="#555" stroke-width="1.3"/><path d="M1580.5 1029v8" stroke="#555" stroke-width="1"/><rect x="1583" y="1026" width="6.5" height="14.5" fill="#555"/><path d="M1656 1033h9.5M1660.7 1028.3v9.5" stroke="#555" stroke-width="1.3"/></g></svg>
<div class="t" style="left:1683.5px;top:1035.56px;font-size:12.8px;color:#3d3d3d;font-weight:normal;">130%</div>
<div class="abs" style="left:1512px;top:0;width:216px;height:121px;background:#0a0a0a;overflow:hidden">
<div class="abs" style="left:0;top:0;width:216px;height:26.5px;overflow:hidden">
<div class="abs" style="left:0px;top:0px;width:216px;height:27px;background:linear-gradient(90deg,#9a9284 0%,#b5ab98 12%,#a89a86 25%,#c4b8a4 38%,#a49a8c 50%,#b8b4ac 62%,#d8d8d4 80%,#e8e8e6 100%);"></div>
<div class="abs" style="left:0px;top:0px;width:216px;height:9px;background:linear-gradient(90deg,#706860 0%,#8a8070 30%,#7a7870 55%,#c8c8c4 75%,#f0f0ee 100%);opacity:0.7;filter:blur(1px)"></div>
<div class="abs" style="left:0px;top:10px;width:10px;height:16px;background:#5a4a40;border-radius:35% 35% 10% 10%;filter:blur(1px)"></div>
<div class="abs" style="left:12px;top:6px;width:14px;height:8px;background:#d8d0c0;border-radius:35% 35% 10% 10%;filter:blur(1px)"></div>
<div class="abs" style="left:18px;top:12px;width:10px;height:14px;background:#8a7a68;border-radius:35% 35% 10% 10%;filter:blur(1px)"></div>
<div class="abs" style="left:36px;top:4px;width:12px;height:10px;background:#3a3430;border-radius:35% 35% 10% 10%;filter:blur(1px)"></div>
<div class="abs" style="left:40px;top:14px;width:12px;height:12px;background:#2a2624;border-radius:35% 35% 10% 10%;filter:blur(1px)"></div>
<div class="abs" style="left:54px;top:8px;width:10px;height:10px;background:#e8e4dc;border-radius:35% 35% 10% 10%;filter:blur(1px)"></div>
<div class="abs" style="left:58px;top:12px;width:12px;height:14px;background:#8890a8;border-radius:35% 35% 10% 10%;filter:blur(1px)"></div>
<div class="abs" style="left:80px;top:8px;width:12px;height:18px;background:#d06858;border-radius:35% 35% 10% 10%;filter:blur(1px)"></div>
<div class="abs" style="left:92px;top:12px;width:8px;height:14px;background:#e0a090;border-radius:35% 35% 10% 10%;filter:blur(1px)"></div>
<div class="abs" style="left:104px;top:6px;width:16px;height:8px;background:#4a4846;border-radius:35% 35% 10% 10%;filter:blur(1px)"></div>
<div class="abs" style="left:106px;top:12px;width:14px;height:14px;background:#3a3634;border-radius:35% 35% 10% 10%;filter:blur(1px)"></div>
<div class="abs" style="left:126px;top:10px;width:12px;height:16px;background:#7080a0;border-radius:35% 35% 10% 10%;filter:blur(1px)"></div>
<div class="abs" style="left:140px;top:14px;width:10px;height:12px;background:#5a5248;border-radius:35% 35% 10% 10%;filter:blur(1px)"></div>
<div class="abs" style="left:152px;top:0px;width:60px;height:10px;background:#f4f4f2;border-radius:35% 35% 10% 10%;filter:blur(1px)"></div>
<div class="abs" style="left:156px;top:12px;width:12px;height:14px;background:#2e2a28;border-radius:35% 35% 10% 10%;filter:blur(1px)"></div>
<div class="abs" style="left:172px;top:8px;width:14px;height:8px;background:#d0d0cc;border-radius:35% 35% 10% 10%;filter:blur(1px)"></div>
<div class="abs" style="left:176px;top:14px;width:12px;height:12px;background:#3a3836;border-radius:35% 35% 10% 10%;filter:blur(1px)"></div>
<div class="abs" style="left:192px;top:10px;width:12px;height:16px;background:#24201e;border-radius:35% 35% 10% 10%;filter:blur(1px)"></div>
<div class="abs" style="left:206px;top:12px;width:10px;height:14px;background:#4a4644;border-radius:35% 35% 10% 10%;filter:blur(1px)"></div>
<div class="abs" style="left:0px;top:22px;width:216px;height:5px;background:#8a8278;opacity:0.6"></div>
</div>
<div class="abs" style="left:0;top:29px;width:71px;height:92px;overflow:hidden;background:linear-gradient(180deg,#c8c4b8 0%,#d0ccc0 40%,#a8a8a8 62%,#50545c 80%,#1e2024 100%)">
<div class="abs" style="left:0px;top:0px;width:27px;height:18px;background:#8a5a48;filter:blur(1px)"></div>
<div class="abs" style="left:0px;top:20px;width:22px;height:18px;background:#5ab0c8;opacity:0.75;filter:blur(2px)"></div>
<div class="abs" style="left:38px;top:10px;width:30px;height:36px;background:#b89c8c;border-radius:45% 45% 40% 40%;filter:blur(1.5px)"></div>
<div class="abs" style="left:42px;top:10px;width:24px;height:10px;background:#c8b8a0;border-radius:45% 45% 0 0;filter:blur(1px)"></div>
<div class="abs" style="left:44px;top:26px;width:22px;height:5px;background:#6a4a40;opacity:0.6;filter:blur(0.8px)"></div>
<div class="abs" style="left:14px;top:44px;width:57px;height:60px;background:#4a5264;border-radius:45% 45% 0 0;filter:blur(1.5px)"></div>
<div class="abs" style="left:46px;top:50px;width:16px;height:30px;background:#6a88b8;filter:blur(2px)"></div>
<div class="abs" style="left:0px;top:70px;width:71px;height:22px;background:#1c1e22;opacity:0.85;filter:blur(1px)"></div>
</div>
<div class="abs" style="left:72.5px;top:29px;width:71px;height:92px;overflow:hidden;background:linear-gradient(180deg,#e4e2d8 0%,#d8d4c4 45%,#c0bcb0 100%)">
<div class="abs" style="left:0px;top:0px;width:30px;height:20px;background:#f4f4f0;"></div>
<div class="abs" style="left:0px;top:20px;width:45px;height:8px;background:#8ab4d8;filter:blur(1px)"></div>
<div class="abs" style="left:30px;top:0px;width:14px;height:20px;background:#4a6a90;opacity:0.7;filter:blur(1.5px)"></div>
<div class="abs" style="left:34px;top:14px;width:26px;height:14px;background:#3a4a60;border-radius:50% 50% 20% 20%;filter:blur(1px)"></div>
<div class="abs" style="left:44px;top:15px;width:12px;height:6px;background:#c84848;opacity:0.8;filter:blur(1px)"></div>
<div class="abs" style="left:36px;top:26px;width:24px;height:26px;background:#7a6858;border-radius:35%;filter:blur(1.5px)"></div>
<div class="abs" style="left:22px;top:44px;width:49px;height:48px;background:#8c7c74;border-radius:40% 40% 0 0;filter:blur(1.5px)"></div>
<div class="abs" style="left:26px;top:52px;width:12px;height:12px;background:#c8b8b0;opacity:0.6;filter:blur(2px)"></div>
<div class="abs" style="left:48px;top:60px;width:14px;height:14px;background:#5a4a48;opacity:0.6;filter:blur(2px)"></div>
<div class="abs" style="left:20px;top:80px;width:51px;height:12px;background:#e8e8e4;filter:blur(1px)"></div>
</div>
<div class="abs" style="left:145px;top:29px;width:71px;height:92px;overflow:hidden;background:linear-gradient(180deg,#e8e6d0 0%,#e4e0c4 50%,#b8b4a0 100%)">
<div class="abs" style="left:2px;top:3px;width:17px;height:30px;background:#2e343c;filter:blur(0.6px)"></div>
<div class="abs" style="left:22px;top:15px;width:3px;height:12px;background:#7a88a8;opacity:0.8"></div>
<div class="abs" style="left:32px;top:18px;width:22px;height:26px;background:#7a6050;border-radius:45%;filter:blur(1.2px)"></div>
<div class="abs" style="left:18px;top:52px;width:20px;height:40px;background:#5aa8b8;border-radius:40% 0 0 0;filter:blur(1.5px)"></div>
<div class="abs" style="left:10px;top:48px;width:10px;height:44px;background:#c8a870;opacity:0.6;filter:blur(1.5px)"></div>
<div class="abs" style="left:24px;top:42px;width:47px;height:50px;background:#222428;border-radius:35% 35% 0 0;filter:blur(1px)"></div>
<div class="abs" style="left:34px;top:66px;width:18px;height:10px;background:#8a6a60;opacity:0.9;filter:blur(1px)"></div>
<div class="abs" style="left:54px;top:52px;width:17px;height:40px;background:#3a4a54;filter:blur(1.5px)"></div>
</div>
<div class="abs" style="left:0px;top:99px;width:71px;height:22px;background:rgba(0,0,0,0.45);"></div>
</div>
<div class="t" style="left:1514.5px;top:109.58px;font-size:11.3px;color:#ffffff;font-weight:bold;letter-spacing:-0.15px">City of Sandpoint</div>
</body></html>
